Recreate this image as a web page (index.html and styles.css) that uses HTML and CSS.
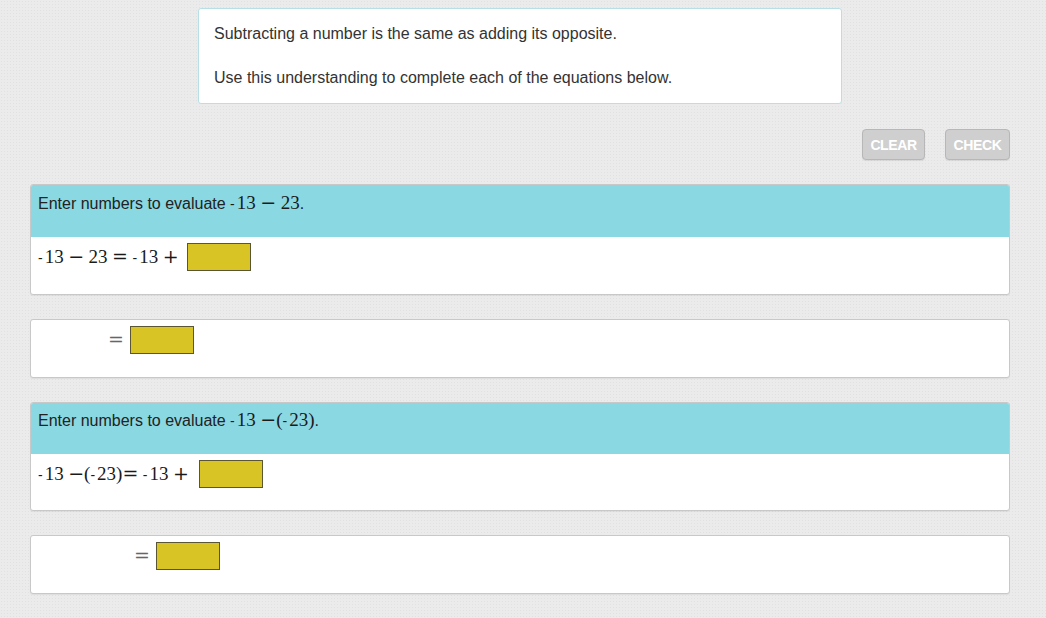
FILE: index.html
```html
<!DOCTYPE html>
<html>
<head>
<meta charset="utf-8">
<link rel="stylesheet" href="styles.css">
</head>
<body>
<div class="page">
  <div class="intro">
    <p>Subtracting a number is the same as adding its opposite.</p>
    <p>Use this understanding to complete each of the equations below.</p>
  </div>
  <div class="actions">
    <button class="btn btn-clear">CLEAR</button>
    <button class="btn btn-check">CHECK</button>
  </div>

  <div class="card">
    <div class="card-head">Enter numbers to evaluate <span class="math"><span class="n">-</span><span>13</span><span class="o">−</span><span>23</span></span>.</div>
    <div class="card-body">
      <span class="math"><span class="n">-</span><span>13</span><span class="o">−</span><span>23</span><span class="o">=</span><span class="n">-</span><span>13</span><span class="o">+</span></span>
      <span class="blank b1"></span>
    </div>
  </div>

  <div class="card">
    <div class="card-body pad1">
      <span class="math"><span class="o eq">=</span></span>
      <span class="blank b2"></span>
    </div>
  </div>

  <div class="card card-b">
    <div class="card-head">Enter numbers to evaluate <span class="math"><span class="n">-</span><span>13</span><span class="o ol">−</span><span>(</span><span class="n">-</span><span>23</span><span>)</span></span>.</div>
    <div class="card-body">
      <span class="math"><span class="n">-</span><span>13</span><span class="o ol">−</span><span>(</span><span class="n">-</span><span>23</span><span>)</span><span class="o orr">=</span><span class="n">-</span><span>13</span><span class="o">+</span></span>
      <span class="blank b3"></span>
    </div>
  </div>

  <div class="card">
    <div class="card-body pad2">
      <span class="math"><span class="o eq">=</span></span>
      <span class="blank b2"></span>
    </div>
  </div>
</div>
</body>
</html>
```

FILE: styles.css
```css
html, body {
  margin: 0;
  padding: 0;
}
body {
  background-color: #ebebeb;
  background-image: radial-gradient(#e1e1e1 0.6px, transparent 0.8px);
  background-size: 3px 3px;
  font-family: "Liberation Sans", Arial, sans-serif;
  color: #222;
  width: 1046px;
  height: 618px;
  overflow: hidden;
}
.page {
  padding-top: 8px;
}
.intro {
  margin-left: 198px;
  width: 642px;
  height: 94px;
  background: #fff;
  border: 1px solid #b8dfe5;
  border-radius: 3px;
}
.intro p {
  margin: 0;
  padding-left: 15px;
  font-size: 16px;
  line-height: 20px;
  color: #333;
}
.intro p:first-child {
  padding-top: 15px;
}
.intro p + p {
  margin-top: 24px;
}
.actions {
  display: flex;
  justify-content: flex-end;
  gap: 20px;
  width: 1010px;
  margin-top: 25px;
}
.btn {
  height: 31px;
  padding: 0;
  background: #cfcfcf;
  border: 1px solid #b7b7b7;
  border-radius: 4px;
  color: #fff;
  font-family: "Liberation Sans", Arial, sans-serif;
  font-size: 14px;
  font-weight: bold;
  letter-spacing: -0.4px;
  box-shadow: 0 1px 1px rgba(0,0,0,0.08);
}
.btn-clear { width: 63px; }
.btn-check { width: 65px; }
.card {
  margin-left: 30px;
  width: 978px;
  margin-top: 24px;
  background: #fff;
  border: 1px solid #c8c8c8;
  border-radius: 3px;
  box-shadow: 0 1px 1px rgba(0,0,0,0.06);
  overflow: hidden;
}
.card-head {
  background: #8ad8e2;
  height: 52px;
  padding: 6px 7px 0;
  box-sizing: border-box;
  font-size: 16px;
  line-height: 22px;
  color: #222;
}
.card-b .card-head {
  height: 51px;
  padding-top: 5px;
}
.card-body {
  height: 57px;
  box-sizing: border-box;
  padding: 6px 7px 0;
  display: flex;
  align-items: flex-start;
}
.card-b .card-body {
  height: 56px;
}
.card-body .math {
  line-height: 27px;
}
.pad1 { padding-left: 77px; }
.pad2 { padding-left: 103px; }
.math {
  font-family: "Liberation Serif", "DejaVu Serif", serif;
  font-size: 19px;
  color: #1a1a1a;
}
.n {
  font-family: "Liberation Sans", Arial, sans-serif;
  font-size: 14px;
  margin-right: 2px;
}
.o {
  font-family: "DejaVu Serif", serif;
  font-size: 19px;
  margin: 0 4.5px;
}
.o.ol { margin-right: 0; }
.o.orr { margin-left: 0; }
.o.eq {
  margin: 0;
  color: #666;
}
.blank {
  display: inline-block;
  width: 62px;
  height: 26px;
  background: #d9c426;
  border: 1px solid #5a5533;
}
.b1 { margin-left: 4px; }
.b2 { margin-left: 6px; }
.b3 { margin-left: 6px; }
```
